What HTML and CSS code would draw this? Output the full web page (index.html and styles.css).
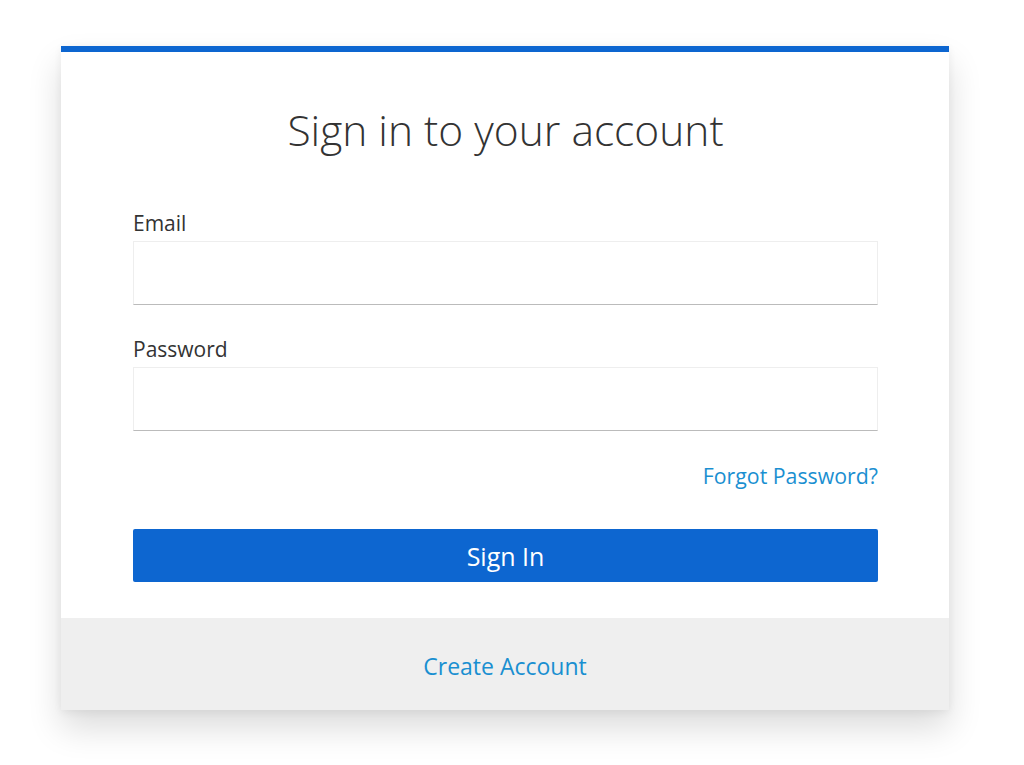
FILE: index.html
```html
<!DOCTYPE html>
<html lang="en">
<head>
    <meta charset="UTF-8">
    <title>Sign in</title>
    <link rel="stylesheet" href="styles.css">
</head>
<body>

    <!-- Login Card -->
    <div class="login-card">
        <form class="login-form">
            <h1 class="login-title">Sign in to your account</h1>

            <label class="field-label" for="email">Email</label>
            <input class="field-input" type="email" id="email">

            <label class="field-label" for="password">Password</label>
            <input class="field-input" type="password" id="password">

            <div class="forgot-row">
                <a href="#" class="link">Forgot Password?</a>
            </div>

            <button type="button" class="signin-btn">Sign In</button>
        </form>

        <!-- Footer -->
        <div class="login-footer">
            <a href="#" class="link link-lg">Create Account</a>
        </div>
    </div>

</body>
</html>
```

FILE: styles.css
```css
/* Reset default styling */
* {
    margin: 0;
    padding: 0;
    box-sizing: border-box;
}

html, body {
    min-height: 100%;
}

body {
    background: #fff;
    font-family: 'Open Sans', sans-serif;
    color: #333;
    padding: 46px 0 55px;
}

/* Card */
.login-card {
    width: 888px;
    margin-left: 61px;
    background: #fff;
    border-top: 6px solid #0d66d0;
    box-shadow: 0 18px 32px rgba(0, 0, 0, 0.14), 0 2px 8px rgba(0, 0, 0, 0.06);
}

.login-form {
    display: flex;
    flex-direction: column;
    padding: 50px 71px 36px 72px;
}

.login-title {
    font-size: 42.5px;
    font-weight: 300;
    line-height: 56px;
    text-align: center;
    color: #333;
    margin-bottom: 51px;
}

.field-label {
    font-size: 21px;
    line-height: 28px;
    color: #333;
    margin-bottom: 4px;
}

.field-input {
    height: 64px;
    border: 1px solid #eee;
    border-bottom: 1px solid #bbb;
    background: #fff;
    margin-bottom: 30px;
    font-family: inherit;
    font-size: 18px;
    padding: 0 14px;
    outline: none;
}

.forgot-row {
    display: flex;
    justify-content: flex-end;
    line-height: 28px;
    margin-top: 1px;
    margin-bottom: 39px;
}

.link {
    font-size: 21.3px;
    color: #1a8fd1;
    text-decoration: none;
}

.link-lg {
    font-size: 23px;
}

.signin-btn {
    height: 53px;
    background: #0d66d0;
    color: #fff;
    border: none;
    border-radius: 2px;
    font-family: inherit;
    font-size: 25px;
    cursor: pointer;
}

/* Footer */
.login-footer {
    height: 92px;
    background: #efefef;
    display: flex;
    justify-content: center;
    align-items: center;
    padding-top: 3px;
}
```
